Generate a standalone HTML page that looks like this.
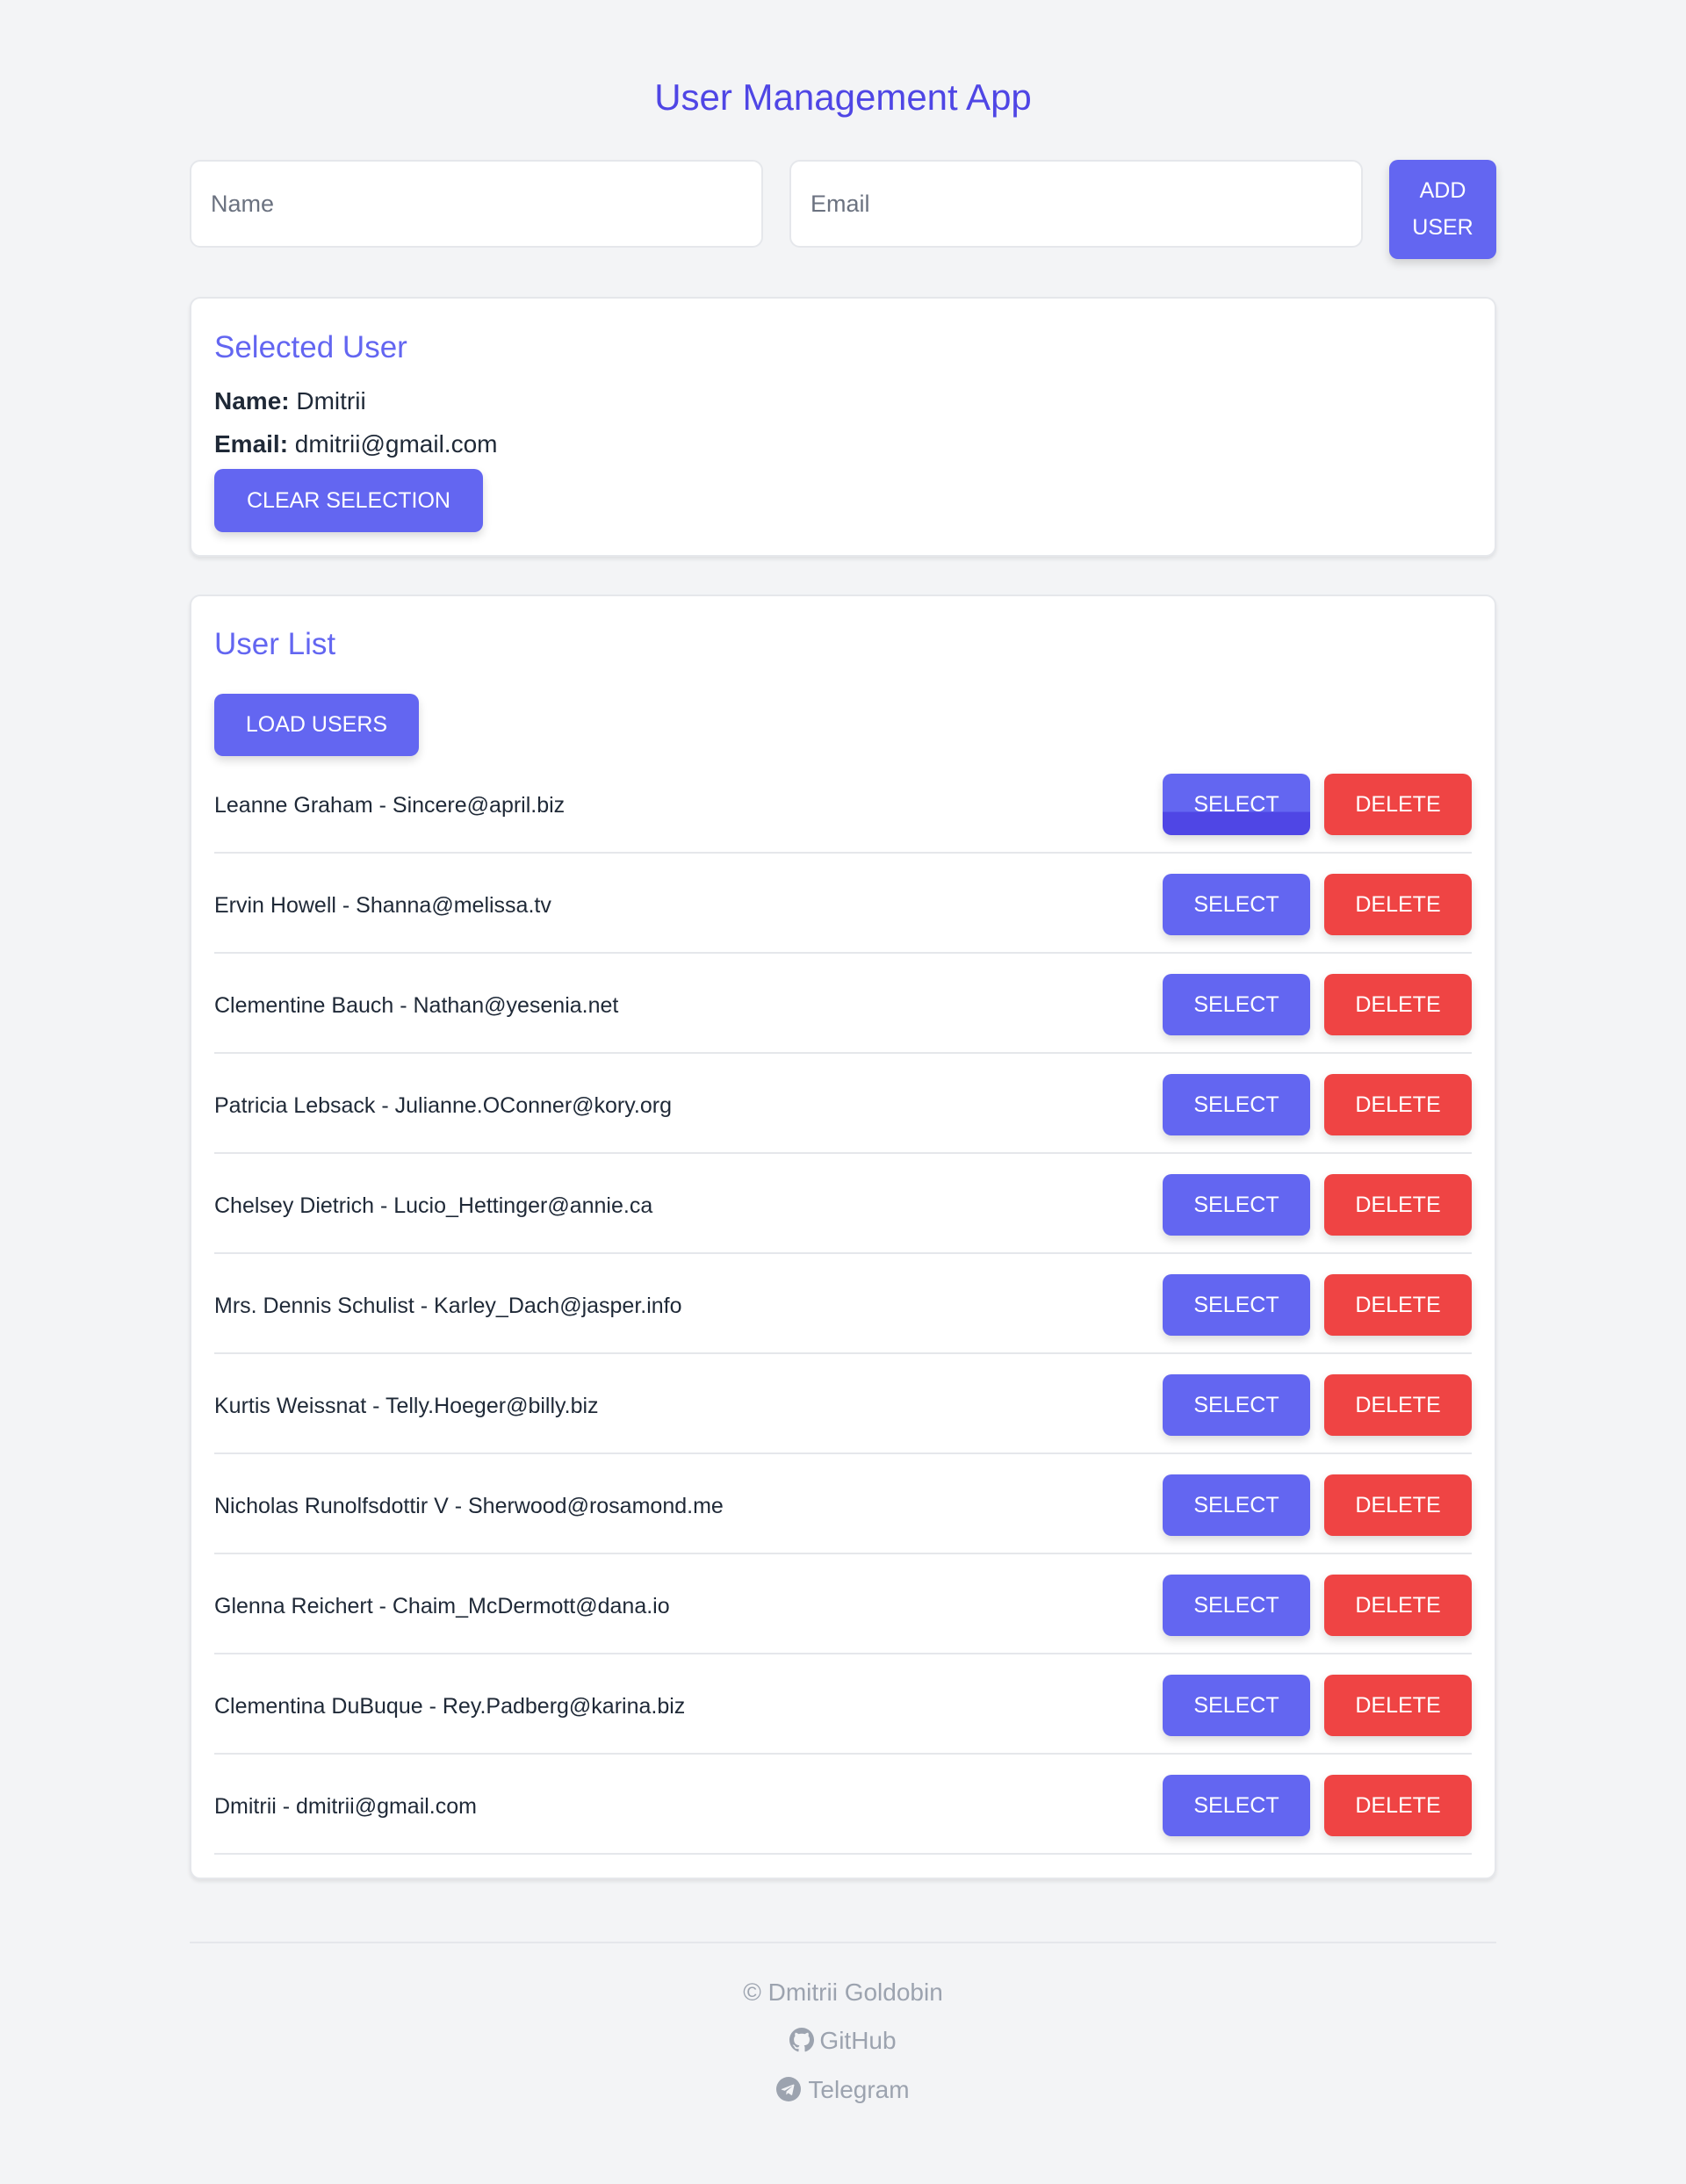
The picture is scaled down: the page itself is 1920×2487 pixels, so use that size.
<!DOCTYPE html>
<html><head><meta charset="utf-8"><style>
*{box-sizing:border-box;margin:0;padding:0}
body{width:1920px;height:2487px;background:#f3f4f6;font-family:"Liberation Sans",Arial,sans-serif;position:relative;overflow:hidden}
.abs{position:absolute}
h1{position:absolute;left:0;width:1920px;top:84px;text-align:center;font-weight:400;font-size:42px;color:#4f46e5;line-height:54px}
.inp{position:absolute;top:182px;height:100px;background:#fff;border:2px solid #e5e7eb;border-radius:12px;font-size:27px;color:#6b7280;padding-left:22px;line-height:96px}
.btn{position:absolute;background:#6366f1;color:#fff;border-radius:10px;text-align:center;font-size:25px;box-shadow:0 5px 10px rgba(0,0,0,.15)}
.red{background:#ef4444}
.card{position:absolute;left:216px;width:1488px;background:#fff;border:2px solid #e5e7eb;border-radius:12px;box-shadow:0 3px 4px rgba(0,0,0,.08)}
.h2{position:absolute;left:244px;font-size:35px;color:#6366f1;line-height:44px}
.t{position:absolute;left:244px;font-size:28px;color:#1f2937;line-height:34px}
.row{position:absolute;left:244px;width:1432px;height:114px;border-bottom:2px solid #e5e7eb}
.row span{position:absolute;left:0;top:42px;font-size:25px;color:#1f2937;line-height:34px}
.row .btn{top:23px;width:168px;height:70px;line-height:70px}
.f{position:absolute;left:0;width:1920px;text-align:center;font-size:28px;color:#9ca3af;line-height:36px}
</style></head><body>
<h1>User Management App</h1>
<div class="inp" style="left:216px;width:653px">Name</div>
<div class="inp" style="left:899px;width:653px">Email</div>
<div class="btn" style="left:1582px;top:182px;width:122px;height:113px;line-height:42px;padding-top:14px">ADD<br>USER</div>

<div class="card" style="top:338px;height:296px"></div>
<div class="h2" style="top:374px">Selected User</div>
<div class="t" style="top:440px"><b>Name:</b> Dmitrii</div>
<div class="t" style="top:489px"><b>Email:</b> dmitrii@gmail.com</div>
<div class="btn" style="left:244px;top:534px;width:306px;height:72px;line-height:72px">CLEAR SELECTION</div>

<div class="card" style="top:677px;height:1463px"></div>
<div class="h2" style="top:712px">User List</div>
<div class="btn" style="left:244px;top:790px;width:233px;height:71px;line-height:71px">LOAD USERS</div>

<div class="row" style="top:858px"><span>Leanne Graham - Sincere@april.biz</span><div class="btn" style="left:1080px;background:linear-gradient(#6366f1 0,#6366f1 62%,#4f46e5 62%)">SELECT</div><div class="btn red" style="left:1264px">DELETE</div></div>
<div class="row" style="top:972px"><span>Ervin Howell - Shanna@melissa.tv</span><div class="btn" style="left:1080px">SELECT</div><div class="btn red" style="left:1264px">DELETE</div></div>
<div class="row" style="top:1086px"><span>Clementine Bauch - Nathan@yesenia.net</span><div class="btn" style="left:1080px">SELECT</div><div class="btn red" style="left:1264px">DELETE</div></div>
<div class="row" style="top:1200px"><span>Patricia Lebsack - Julianne.OConner@kory.org</span><div class="btn" style="left:1080px">SELECT</div><div class="btn red" style="left:1264px">DELETE</div></div>
<div class="row" style="top:1314px"><span>Chelsey Dietrich - Lucio_Hettinger@annie.ca</span><div class="btn" style="left:1080px">SELECT</div><div class="btn red" style="left:1264px">DELETE</div></div>
<div class="row" style="top:1428px"><span>Mrs. Dennis Schulist - Karley_Dach@jasper.info</span><div class="btn" style="left:1080px">SELECT</div><div class="btn red" style="left:1264px">DELETE</div></div>
<div class="row" style="top:1542px"><span>Kurtis Weissnat - Telly.Hoeger@billy.biz</span><div class="btn" style="left:1080px">SELECT</div><div class="btn red" style="left:1264px">DELETE</div></div>
<div class="row" style="top:1656px"><span>Nicholas Runolfsdottir V - Sherwood@rosamond.me</span><div class="btn" style="left:1080px">SELECT</div><div class="btn red" style="left:1264px">DELETE</div></div>
<div class="row" style="top:1770px"><span>Glenna Reichert - Chaim_McDermott@dana.io</span><div class="btn" style="left:1080px">SELECT</div><div class="btn red" style="left:1264px">DELETE</div></div>
<div class="row" style="top:1884px"><span>Clementina DuBuque - Rey.Padberg@karina.biz</span><div class="btn" style="left:1080px">SELECT</div><div class="btn red" style="left:1264px">DELETE</div></div>
<div class="row" style="top:1998px"><span>Dmitrii - dmitrii@gmail.com</span><div class="btn" style="left:1080px">SELECT</div><div class="btn red" style="left:1264px">DELETE</div></div>

<div class="abs" style="left:216px;top:2211px;width:1488px;height:2px;background:#e5e7eb"></div>
<div class="f" style="top:2251px">© Dmitrii Goldobin</div>
<div class="f" style="top:2306px"><svg width="28" height="28" viewBox="0 0 16 16" style="vertical-align:-4px;margin-right:6px"><path fill="#9ca3af" d="M8 0C3.58 0 0 3.58 0 8c0 3.54 2.29 6.530 5.47 7.59.4.07.55-.17.55-.38 0-.19-.01-.82-.01-1.49-2.01.37-2.530-.49-2.69-.94-.09-.23-.48-.94-.82-1.13-.28-.15-.68-.52-.01-.53.63-.01 1.08.58 1.23.82.72 1.21 1.87.87 2.33.66.07-.52.28-.87.51-1.07-1.78-.2-3.64-.89-3.64-3.95 0-.87.31-1.59.82-2.15-.08-.2-.36-1.02.08-2.12 0 0 .67-.21 2.2.82.64-.18 1.32-.27 2-.27.68 0 1.36.09 2 .27 1.53-1.04 2.2-.82 2.2-.82.44 1.1.16 1.92.08 2.12.51.56.82 1.27.82 2.15 0 3.07-1.87 3.75-3.65 3.95.29.25.54.73.54 1.48 0 1.07-.01 1.93-.01 2.2 0 .21.15.46.55.38A8.013 8.013 0 0016 8c0-4.42-3.58-8-8-8z"/></svg>GitHub</div>
<div class="f" style="top:2362px"><svg width="28" height="28" viewBox="0 0 24 24" style="vertical-align:-4px;margin-right:8px"><circle cx="12" cy="12" r="12" fill="#9ca3af"/><path fill="#f3f4f6" d="M5.5 11.8l11.2-4.4c.5-.2 1 .1.8.9l-1.9 9c-.1.6-.5.8-1 .5l-2.9-2.1-1.4 1.3c-.2.2-.3.3-.6.3l.2-3 5.4-4.9c.2-.2 0-.3-.3-.1l-6.7 4.2-2.9-.9c-.6-.2-.6-.6.1-.8z"/></svg>Telegram</div>
</body></html>
